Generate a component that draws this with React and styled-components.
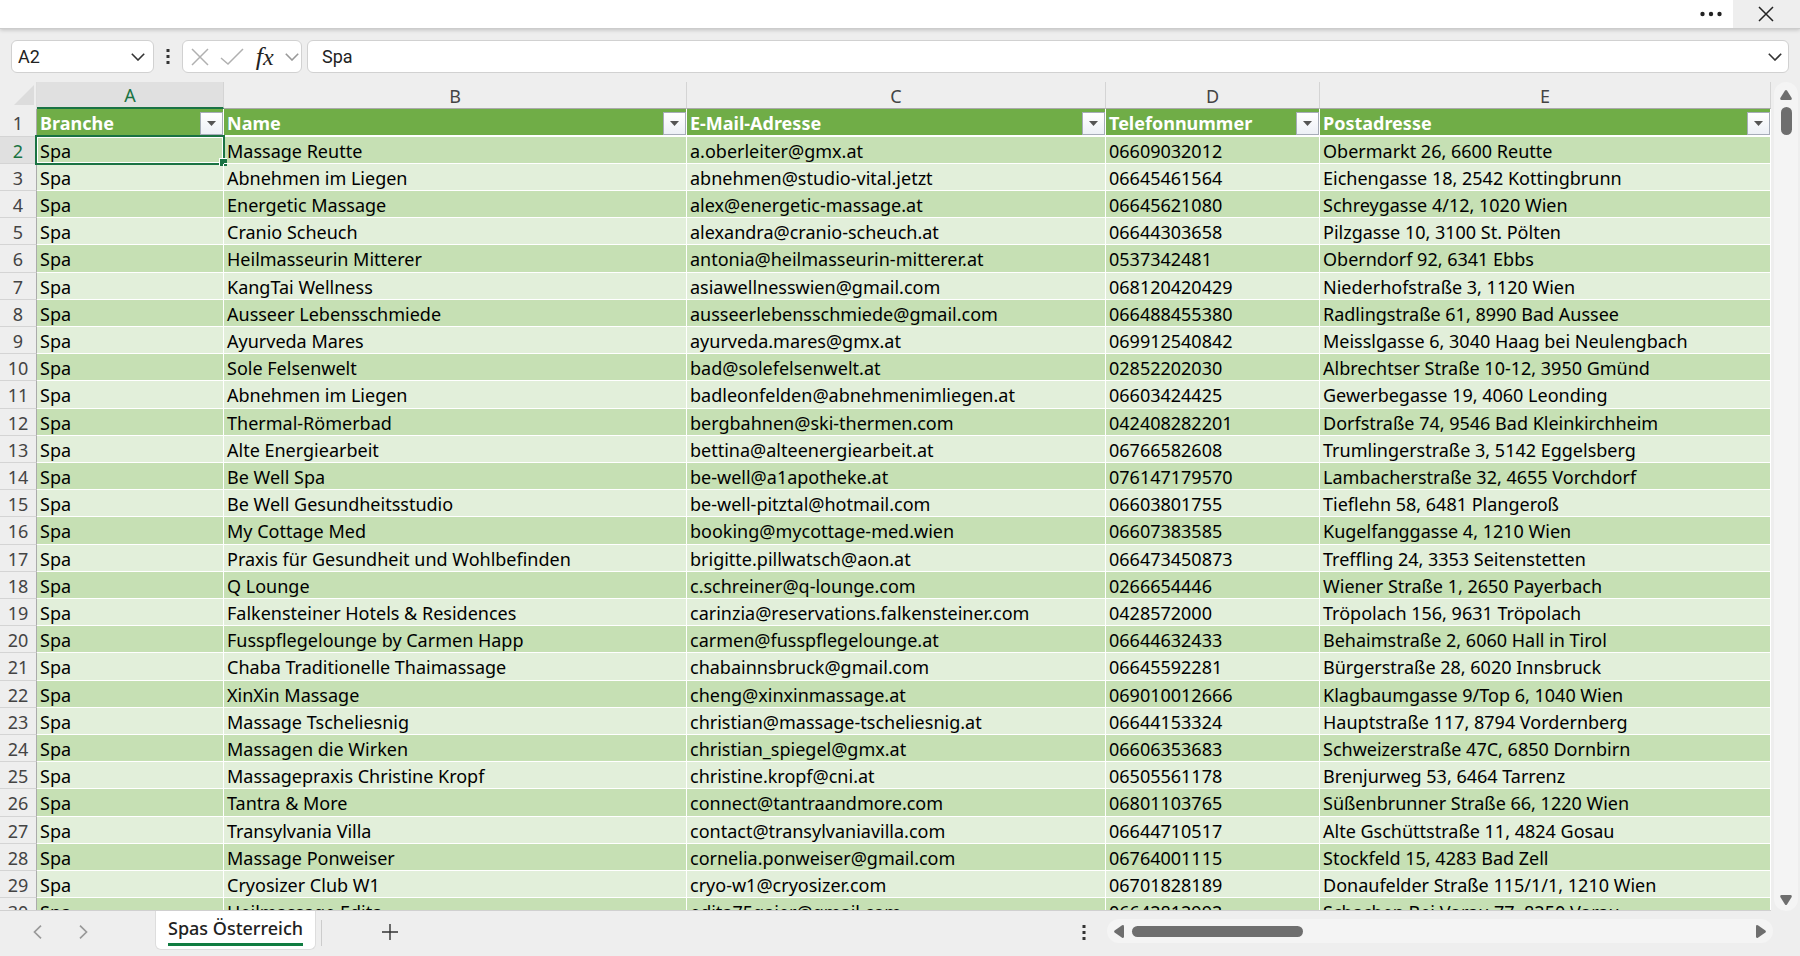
import React from 'react';
import styled, { createGlobalStyle, css } from 'styled-components';

const rows = [
  ['Massage Reutte', 'a.oberleiter@gmx.at', '06609032012', 'Obermarkt 26, 6600 Reutte'],
  ['Abnehmen im Liegen', 'abnehmen@studio-vital.jetzt', '06645461564', 'Eichengasse 18, 2542 Kottingbrunn'],
  ['Energetic Massage', 'alex@energetic-massage.at', '06645621080', 'Schreygasse 4/12, 1020 Wien'],
  ['Cranio Scheuch', 'alexandra@cranio-scheuch.at', '06644303658', 'Pilzgasse 10, 3100 St. Pölten'],
  ['Heilmasseurin Mitterer', 'antonia@heilmasseurin-mitterer.at', '0537342481', 'Oberndorf 92, 6341 Ebbs'],
  ['KangTai Wellness', 'asiawellnesswien@gmail.com', '068120420429', 'Niederhofstraße 3, 1120 Wien'],
  ['Ausseer Lebensschmiede', 'ausseerlebensschmiede@gmail.com', '066488455380', 'Radlingstraße 61, 8990 Bad Aussee'],
  ['Ayurveda Mares', 'ayurveda.mares@gmx.at', '069912540842', 'Meisslgasse 6, 3040 Haag bei Neulengbach'],
  ['Sole Felsenwelt', 'bad@solefelsenwelt.at', '02852202030', 'Albrechtser Straße 10-12, 3950 Gmünd'],
  ['Abnehmen im Liegen', 'badleonfelden@abnehmenimliegen.at', '06603424425', 'Gewerbegasse 19, 4060 Leonding'],
  ['Thermal-Römerbad', 'bergbahnen@ski-thermen.com', '042408282201', 'Dorfstraße 74, 9546 Bad Kleinkirchheim'],
  ['Alte Energiearbeit', 'bettina@alteenergiearbeit.at', '06766582608', 'Trumlingerstraße 3, 5142 Eggelsberg'],
  ['Be Well Spa', 'be-well@a1apotheke.at', '076147179570', 'Lambacherstraße 32, 4655 Vorchdorf'],
  ['Be Well Gesundheitsstudio', 'be-well-pitztal@hotmail.com', '06603801755', 'Tieflehn 58, 6481 Plangeroß'],
  ['My Cottage Med', 'booking@mycottage-med.wien', '06607383585', 'Kugelfanggasse 4, 1210 Wien'],
  ['Praxis für Gesundheit und Wohlbefinden', 'brigitte.pillwatsch@aon.at', '066473450873', 'Treffling 24, 3353 Seitenstetten'],
  ['Q Lounge', 'c.schreiner@q-lounge.com', '0266654446', 'Wiener Straße 1, 2650 Payerbach'],
  ['Falkensteiner Hotels & Residences', 'carinzia@reservations.falkensteiner.com', '0428572000', 'Tröpolach 156, 9631 Tröpolach'],
  ['Fusspflegelounge by Carmen Happ', 'carmen@fusspflegelounge.at', '06644632433', 'Behaimstraße 2, 6060 Hall in Tirol'],
  ['Chaba Traditionelle Thaimassage', 'chabainnsbruck@gmail.com', '06645592281', 'Bürgerstraße 28, 6020 Innsbruck'],
  ['XinXin Massage', 'cheng@xinxinmassage.at', '069010012666', 'Klagbaumgasse 9/Top 6, 1040 Wien'],
  ['Massage Tscheliesnig', 'christian@massage-tscheliesnig.at', '06644153324', 'Hauptstraße 117, 8794 Vordernberg'],
  ['Massagen die Wirken', 'christian_spiegel@gmx.at', '06606353683', 'Schweizerstraße 47C, 6850 Dornbirn'],
  ['Massagepraxis Christine Kropf', 'christine.kropf@cni.at', '06505561178', 'Brenjurweg 53, 6464 Tarrenz'],
  ['Tantra & More', 'connect@tantraandmore.com', '06801103765', 'Süßenbrunner Straße 66, 1220 Wien'],
  ['Transylvania Villa', 'contact@transylvaniavilla.com', '06644710517', 'Alte Gschüttstraße 11, 4824 Gosau'],
  ['Massage Ponweiser', 'cornelia.ponweiser@gmail.com', '06764001115', 'Stockfeld 15, 4283 Bad Zell'],
  ['Cryosizer Club W1', 'cryo-w1@cryosizer.com', '06701828189', 'Donaufelder Straße 115/1/1, 1210 Wien'],
  ['Heilmassage Edita', 'edita75gaier@gmail.com', '06642812992', 'Schachen Bei Vorau 77, 8250 Vorau'],
];

const columns = [
  { letter: 'A', title: 'Branche' },
  { letter: 'B', title: 'Name' },
  { letter: 'C', title: 'E-Mail-Adresse' },
  { letter: 'D', title: 'Telefonnummer' },
  { letter: 'E', title: 'Postadresse' },
];

const Chevron = ({ color = '#333' }) => (
  <svg width="14" height="8" viewBox="0 0 14 8" fill="none" stroke={color} strokeWidth="1.6">
    <path d="M0.8 0.8L7 7l6.2-6.2" />
  </svg>
);

const Dots = () => (
  <svg width="4" height="16" viewBox="0 0 4 16" fill="#333">
    <path d="M.5 0h3v3h-3zM.5 6h3v3h-3zM.5 12h3v3h-3z" />
  </svg>
);

const App = () => (
  <>
    <GlobalStyle />
    <Page>
      <TitleBar>
        <TitleButton aria-label="More options">
          <svg width="22" height="6" viewBox="0 0 22 6" fill="#222">
            <circle cx="2.5" cy="3" r="2.2" />
            <circle cx="11" cy="3" r="2.2" />
            <circle cx="19.5" cy="3" r="2.2" />
          </svg>
        </TitleButton>
        <TitleButton $shaded aria-label="Close">
          <svg width="16" height="16" viewBox="0 0 16 16" stroke="#222" strokeWidth="1.5">
            <path d="M1 1l14 14M15 1L1 15" />
          </svg>
        </TitleButton>
      </TitleBar>

      <FormulaBar>
        <NameBox>
          <BarInput aria-label="Name box" defaultValue="A2" />
          <IconButton aria-label="Open name list"><Chevron /></IconButton>
        </NameBox>
        <Grip><Dots /></Grip>
        <FormulaTools>
          <IconButton aria-label="Cancel">
            <svg width="18" height="18" viewBox="0 0 18 18" stroke="#b0b0b0" strokeWidth="1.5">
              <path d="M1 1l16 16M17 1L1 17" />
            </svg>
          </IconButton>
          <IconButton aria-label="Enter">
            <svg width="24" height="18" viewBox="0 0 24 18" fill="none" stroke="#b0b0b0" strokeWidth="1.5">
              <path d="M1 10l7 6L23 1" />
            </svg>
          </IconButton>
          <FxButton aria-label="Insert function">f<small>x</small></FxButton>
          <IconButton aria-label="Function list"><Chevron color="#999" /></IconButton>
        </FormulaTools>
        <FormulaBox>
          <BarInput aria-label="Formula" defaultValue="Spa" />
          <IconButton aria-label="Expand formula bar"><Chevron /></IconButton>
        </FormulaBox>
      </FormulaBar>

      <Workspace>
        <SheetArea>
          <Sheet>
            <colgroup>
              <Col $w={37} />
              <Col $w={187} />
              <Col $w={463} />
              <Col $w={419} />
              <Col $w={214} />
              <col />
            </colgroup>
            <thead>
              <tr>
                <Corner>
                  <svg width="20" height="20" viewBox="0 0 20 20" fill="#dcdcdc">
                    <path d="M20 0v20H0z" />
                  </svg>
                </Corner>
                {columns.map((col, i) => (
                  <ColumnHead key={col.letter} scope="col" $active={i === 0}>{col.letter}</ColumnHead>
                ))}
              </tr>
            </thead>
            <tbody>
              <BodyRow>
                <RowHead scope="row">1</RowHead>
                {columns.map((col) => (
                  <TitleCell key={col.letter}>
                    <TitleContent>
                      {col.title}
                      <FilterButton aria-label={`Filter ${col.title}`}>
                        <svg width="9" height="5" viewBox="0 0 9 5" fill="#555"><path d="M0 0h9L4.5 5z" /></svg>
                      </FilterButton>
                    </TitleContent>
                  </TitleCell>
                ))}
              </BodyRow>
              {rows.map((row, i) => (
                <BodyRow key={row[1]} $dark={i % 2 === 0}>
                  <RowHead scope="row" $active={i === 0}>{i + 2}</RowHead>
                  <Cell>
                    Spa
                    {i === 0 && <Selection />}
                  </Cell>
                  {row.map((text) => <Cell key={text}>{text}</Cell>)}
                </BodyRow>
              ))}
            </tbody>
          </Sheet>
        </SheetArea>
        <VerticalScroll>
          <ScrollArrow aria-label="Scroll up">
            <svg width="12" height="10" viewBox="0 0 12 10" fill="#6e6e6e"><path d="M5 .6Q6-.4 7 .6l4.7 7.5Q12 10 10.5 10h-9Q0 10 .3 8.1z" /></svg>
          </ScrollArrow>
          <VerticalThumb />
          <ScrollSpace />
          <ScrollArrow aria-label="Scroll down">
            <svg width="12" height="10" viewBox="0 0 12 10" fill="#6e6e6e"><path d="M5 9.4Q6 10.4 7 9.4l4.7-7.5Q12 0 10.5 0h-9Q0 0 .3 1.9z" /></svg>
          </ScrollArrow>
        </VerticalScroll>
      </Workspace>

      <Footer>
        <TabArrows>
          <IconButton aria-label="Previous sheet">
            <svg width="9" height="14" viewBox="0 0 9 14" fill="none" stroke="#999" strokeWidth="1.7"><path d="M8 .7L1.5 7 8 13.3" /></svg>
          </IconButton>
          <IconButton aria-label="Next sheet">
            <svg width="9" height="14" viewBox="0 0 9 14" fill="none" stroke="#999" strokeWidth="1.7"><path d="M1 .7L7.5 7 1 13.3" /></svg>
          </IconButton>
        </TabArrows>
        <SheetTab><span>Spas Österreich</span></SheetTab>
        <Divider />
        <AddSheet aria-label="Add sheet">
          <svg width="16" height="16" viewBox="0 0 16 16" stroke="#333" strokeWidth="1.4"><path d="M8 0v16M0 8h16" /></svg>
        </AddSheet>
        <FooterGrip><Dots /></FooterGrip>
        <HorizontalScroll>
          <ScrollArrow aria-label="Scroll left">
            <svg width="10" height="13" viewBox="0 0 10 13" fill="#6e6e6e"><path d="M.6 5.5q-1 1 0 2l7.5 5.2Q10 13.5 10 11.5v-10Q10-.5 8.1.3z" /></svg>
          </ScrollArrow>
          <HorizontalThumb />
          <ScrollSpace />
          <ScrollArrow aria-label="Scroll right">
            <svg width="10" height="13" viewBox="0 0 10 13" fill="#6e6e6e"><path d="M9.4 5.5q1 1 0 2l-7.5 5.2Q0 13.5 0 11.5v-10Q0-.5 1.9.3z" /></svg>
          </ScrollArrow>
        </HorizontalScroll>
      </Footer>
    </Page>
  </>
);

const GlobalStyle = createGlobalStyle`
  * {
    box-sizing: border-box;
  }
  body {
    margin: 0;
    background: #eee;
    font-family: 'Noto Sans', sans-serif;
  }
  button {
    padding: 0;
    border: 0;
    background: none;
    font: inherit;
  }
  svg {
    display: block;
  }
`;

const Page = styled.div`
  display: flex;
  flex-direction: column;
  height: 100vh;
  background: #eee;
  overflow: hidden;
`;

const TitleBar = styled.header`
  display: flex;
  flex-shrink: 0;
  justify-content: flex-end;
  height: 29px;
  background: #fff;
  border-bottom: 1px solid #ccc;
  box-shadow: 0 1px 4px rgba(0, 0, 0, 0.2);
`;

const TitleButton = styled.button`
  display: flex;
  align-items: center;
  justify-content: center;
  width: ${props => props.$shaded ? 67 : 44}px;
  padding-right: ${props => props.$shaded ? 2 : 0}px;
  background: ${props => props.$shaded ? '#eee' : 'none'};
`;

const FormulaBar = styled.div`
  display: flex;
  flex-shrink: 0;
  height: 53px;
  padding: 11px 11px 9px;
`;

const box = css`
  display: flex;
  align-items: center;
  height: 33px;
  border: 1px solid #d1d1d1;
  border-radius: 6px;
  background: #fff;
`;

const NameBox = styled.div`
  ${box}
  width: 143px;
  padding: 0 8px 0 6px;
`;

const BarInput = styled.input`
  flex: 1;
  min-width: 0;
  padding: 0;
  border: 0;
  outline: 0;
  background: none;
  color: #222;
  font-family: Roboto, sans-serif;
  font-size: 18px;
`;

const IconButton = styled.button`
  flex-shrink: 0;
`;

const Grip = styled.div`
  display: flex;
  align-items: center;
  justify-content: center;
  width: 28px;
`;

const FormulaTools = styled.div`
  ${box}
  justify-content: space-between;
  width: 120px;
  padding: 0 2px 0 8px;
`;

const FxButton = styled.button`
  color: #222;
  font-family: 'Liberation Serif', serif;
  font-size: 26px;
  font-style: italic;
  line-height: 28px;

  small {
    font-size: 24px;
  }
`;

const FormulaBox = styled.div`
  ${box}
  flex: 1;
  margin-left: 5px;
  padding: 0 6px 0 14px;
`;

const Workspace = styled.main`
  display: flex;
  flex: 1;
  min-height: 0;
`;

const SheetArea = styled.div`
  flex: 1;
  min-width: 0;
  overflow: hidden;
  border-bottom: 1px solid #d0d0d0;
`;

const Sheet = styled.table`
  width: 100%;
  table-layout: fixed;
  border-collapse: separate;
  border-spacing: 0;
  font-size: 18px;
  line-height: 24px;
`;

const Col = styled.col`
  width: ${props => props.$w}px;
`;

const Corner = styled.td`
  height: 27px;
  padding: 3px 2px 4px 14px;
  border-right: 1px solid #ddd;
`;

const ColumnHead = styled.th`
  height: 27px;
  padding: ${props => props.$active ? 1 : 2}px 0 0;
  border-right: 1px solid #d4d4d4;
  border-bottom: ${props => props.$active ? '2px solid #1a7343' : '1px solid #aaa'};
  background: ${props => props.$active ? '#e0e0e0' : '#eee'};
  color: ${props => props.$active ? '#1a7343' : '#444'};
  font-weight: normal;
  vertical-align: bottom;
`;

const RowHead = styled.th`
  padding: 1px 0 0;
  border-right: 1px solid ${props => props.$active ? '#1a7343' : '#ababab'};
  border-bottom: 1px solid #d4d4d4;
  background: ${props => props.$active ? '#e0e0e0' : '#eee'};
  color: ${props => props.$active ? '#1a7343' : '#444'};
  font-weight: normal;
`;

const Cell = styled.td`
  position: relative;
  padding: 1px 3px 0;
  border-right: 1px solid #fff;
  border-bottom: 1px solid #fff;
  color: #000;
  white-space: nowrap;
`;

const TitleCell = styled.th`
  padding: 2px 0 0 3px;
  border-right: 1px solid #fff;
  border-bottom: 2px solid #fff;
  background: #70ad47;
  color: #fff;
  text-align: left;
`;

// every fifth row is a pixel taller, like the sheet's 20.4pt row height
const BodyRow = styled.tr`
  height: 27px;
  background: ${props => props.$dark ? '#c6e0b4' : '#e2efda'};

  &:nth-child(5n + 1) {
    height: 28px;
  }
`;

const TitleContent = styled.div`
  display: flex;
  align-items: center;
  justify-content: space-between;
`;

const FilterButton = styled.button`
  display: flex;
  align-items: center;
  justify-content: center;
  width: 23px;
  height: 23px;
  border: 1px solid #a6acb8;
  background: linear-gradient(#fff, #edf0f6);
`;

const Selection = styled.div`
  position: absolute;
  inset: -2px -2px -2px -2px;
  border: 2px solid #1a7343;
  box-shadow: inset 0 0 0 1px #fff;

  &::after {
    content: '';
    position: absolute;
    right: -4px;
    bottom: -3px;
    width: 7px;
    height: 7px;
    border-top: 1px solid #fff;
    border-left: 1px solid #fff;
    background: #1a7343;
  }
`;

const VerticalScroll = styled.div`
  display: flex;
  flex-direction: column;
  align-items: center;
  width: 24px;
  margin: 0 2px 0 3px;
  padding: 8px 0 6px;
  border-radius: 12px;
  background: #f4f4f4;
`;

const ScrollArrow = styled.button`
  flex-shrink: 0;
`;

const ScrollSpace = styled.div`
  flex: 1;
`;

const VerticalThumb = styled.div`
  width: 11px;
  height: 28px;
  margin-top: 7px;
  border-radius: 6px;
  background: #6e6e6e;
`;

const Footer = styled.footer`
  display: flex;
  flex-shrink: 0;
  height: 45px;
`;

const TabArrows = styled.div`
  display: flex;
  align-items: center;
  gap: 37px;
  width: 155px;
  padding: 0 0 4px 33px;
`;

const SheetTab = styled.button`
  height: 39px;
  padding: 0 12px 2px;
  border: 1px solid #ddd;
  border-top: 0;
  border-radius: 0 0 6px 6px;
  background: #fff;
  color: #222;
  font-size: 18px;
  font-weight: 500;

  span {
    display: block;
    border-bottom: 3px solid #107c41;
    line-height: 30px;
  }
`;

const Divider = styled.div`
  width: 1px;
  height: 26px;
  margin: 9px 0 0 5px;
  background: #ccc;
`;

const AddSheet = styled.button`
  margin: 0 auto 4px 60px;
`;

const FooterGrip = styled.div`
  display: flex;
  align-items: center;
  margin: 0 21px 2px 0;
`;

const HorizontalScroll = styled.div`
  display: flex;
  align-items: center;
  width: 37%;
  height: 24px;
  margin: 8px 27px 0 0;
  padding: 0 7px;
  border-radius: 12px;
  background: #f4f4f4;
`;

const HorizontalThumb = styled.div`
  width: 171px;
  height: 11px;
  margin-left: 8px;
  border-radius: 6px;
  background: #6e6e6e;
`;

export default App;
